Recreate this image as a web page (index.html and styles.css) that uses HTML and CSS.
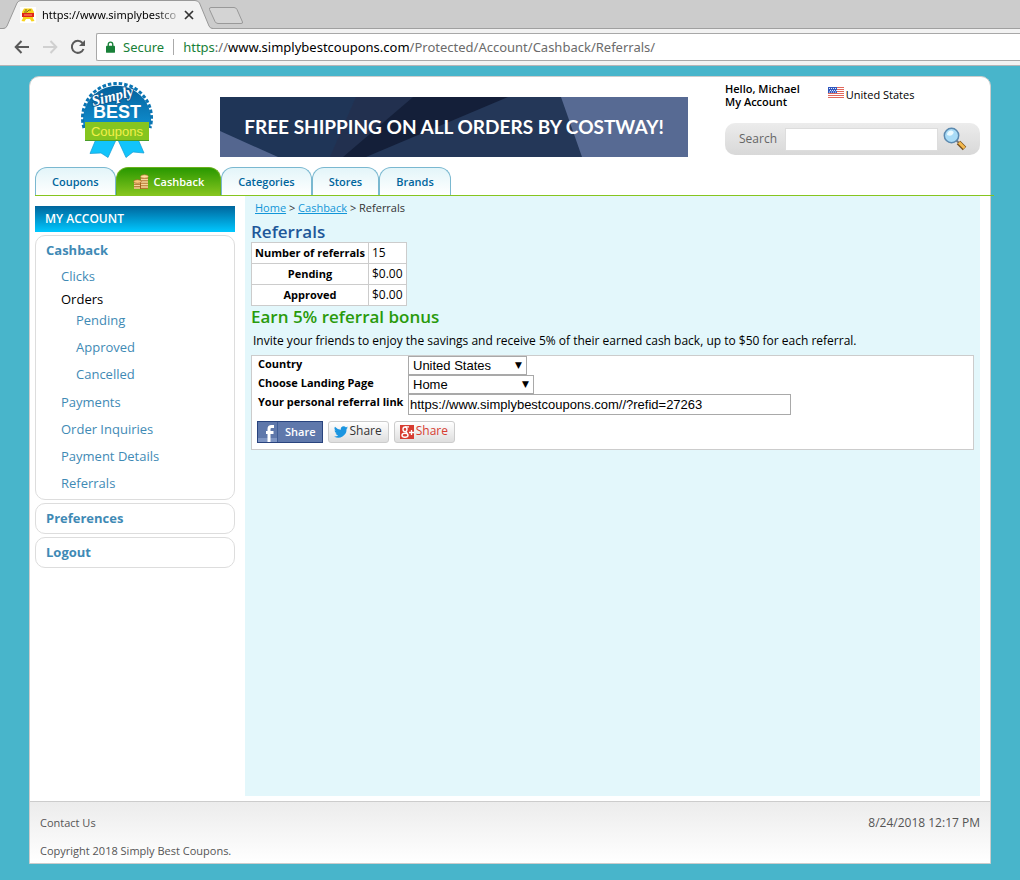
FILE: index.html
```html
<!DOCTYPE html>
<html lang="en">
<head>
<meta charset="utf-8">
<title>Referrals - Simply Best Coupons</title>
<link rel="stylesheet" href="styles.css">
</head>
<body>
<div class="browser">
  <div class="tabstrip">
    <svg class="tab-shapes" width="250" height="29" viewBox="0 0 250 29" aria-hidden="true">
      <path d="M3 29Q6 28.500 7 26L17 3Q18.500.5 21 .5H195Q198 .5 199.500 3L209 26Q210 28.500 213 29Z" fill="#f2f2f2"/>
      <path d="M0 28.500H3Q6 28.500 7 26L17 3Q18.500.5 21 .5H195Q198 .5 199.500 3L209 26Q210 28.500 213 28.500" fill="none" stroke="#999"/>
      <path d="M211 7.500H234Q236 7.500 237 9.500L242.500 22Q243 23.500 241 23.500H218Q216 23.500 215 21.500L209.500 9.500Q209 7.500 211 7.500Z" fill="#d4d4d4" stroke="#999"/>
    </svg>
    <div class="tab">
      <svg width="16" height="16" viewBox="0 0 16 16" aria-hidden="true"><path fill="#fff" d="M0 0h16v16H0z"/><path d="M4 1.500h8L14 5l-1 6 1.500 3-3 .5L10 12H6l-1.500 2.500-3-.5L3 11 2 5Z" fill="#f8d31c"/><path d="M4 5h3l2-2h2M5 3h2" stroke="#7d6a20" fill="none"/><path d="M2 6h12v4H2z" fill="#df2419"/><path d="M4 8h8" stroke="#ff9a72"/></svg>
      <span class="tab-title">https://www.simplybestco</span>
      <button class="icon-btn" aria-label="Close tab"><svg width="10" height="10" viewBox="0 0 10 10"><path d="M1 1l8 8M9 1L1 9" stroke="#333" stroke-width="1.700"/></svg></button>
    </div>
  </div>
  <div class="toolbar">
    <button class="icon-btn" aria-label="Back"><svg width="16" height="14" viewBox="0 0 16 14"><path d="M15 7H2M7.500 1L1.700 7l5.800 6" fill="none" stroke="#5a5a5a" stroke-width="2"/></svg></button>
    <button class="icon-btn" aria-label="Forward"><svg width="16" height="14" viewBox="0 0 16 14"><path d="M1 7h13M8.500 1l5.800 6-5.800 6" fill="none" stroke="#d0d0d0" stroke-width="2"/></svg></button>
    <button class="icon-btn" aria-label="Reload"><svg width="16" height="16" viewBox="0 0 16 16"><path d="M13.500 10A6 6 0 1 1 12.500 4" fill="none" stroke="#5a5a5a" stroke-width="2"/><path d="M15 1v6H9Z" fill="#5a5a5a"/></svg></button>
    <div class="address">
      <svg width="9" height="12" viewBox="0 0 10 13" aria-hidden="true"><path d="M1 5h8q1 0 1 1v6q0 1-1 1H1q-1 0-1-1V6q0-1 1-1Z" fill="#188038"/><path d="M2.500 6V3.500a2.500 2.500 0 0 1 5 0V6" fill="none" stroke="#188038" stroke-width="1.500"/></svg>
      <span class="secure">Secure</span>
      <span class="url"><span class="scheme">https</span><span class="dim">://</span>www.simplybestcoupons.com<span class="dim">/Protected/Account/Cashback/Referrals/</span></span>
    </div>
  </div>
</div>

<div class="page">
  <header class="header">
    <a class="logo" href="#" aria-label="Simply Best Coupons">
      <svg width="74" height="76" viewBox="0 0 74 76">
        <defs><linearGradient id="seal" x1="0" y1="0" x2="0" y2="1"><stop offset="0" stop-color="#05619c"/><stop offset="1" stop-color="#0f8fd0"/></linearGradient></defs>
        <path d="M4 46A34 34 0 1 1 70 46Z" fill="url(#seal)"/>
        <path d="M4 46A34.500 34.500 0 1 1 70 46" fill="none" stroke="#0a74b2" stroke-width="3" stroke-dasharray="3.500 2"/>
        <path d="M16 57L10 71.500l11-.5 7 4.500L36 58Z" fill="#12c4fb" stroke="#139bd3" stroke-width=".7"/>
        <path d="M58 57l6 14-11-1-7 5.500L38 58Z" fill="#12c4fb" stroke="#139bd3" stroke-width=".7"/>
        <path d="M5 40H69V59H5Z" fill="#86c51f"/>
        <path d="M5 58.500H69" stroke="#4a9c2a"/>
        <text x="37" y="54" class="logo-coupons" text-anchor="middle">Coupons</text>
        <text x="37" y="36" class="logo-best" text-anchor="middle">BEST</text>
        <text x="13" y="24" class="logo-simply" transform="rotate(-14 13 24)">Simply</text>
      </svg>
    </a>
    <a class="banner" href="#">
      <svg class="banner-art" viewBox="0 0 468 60" preserveAspectRatio="none" aria-hidden="true">
        <path d="M0 0h468v60H0z" fill="#243758"/><path d="M0 0h136L110 60H0Z" fill="#1f3557"/><path d="M136 0h57L124 60H110Z" fill="#22304f"/>
        <path d="M193 0h95L146 60H123Z" fill="#141f39"/><path d="M341 0h127v60H362Z" fill="#576a93"/><path d="M0 34L58 60H0Z" fill="#54668f"/>
      </svg>
      <span class="banner-text">FREE SHIPPING ON ALL ORDERS BY COSTWAY!</span>
    </a>
    <div class="header-side">
      <div class="greeting">
        <div class="who"><span>Hello, Michael</span><a href="#">My Account</a></div>
        <div class="region">
          <svg width="16" height="11" viewBox="0 0 16 11" aria-hidden="true"><path fill="#fff" d="M0 0h16v11H0z"/><path d="M0 .5h16M0 2.500h16M0 4.500h16M0 6.500h16M0 8.500h16M0 10.500h16" stroke="#e0685c"/><path fill="#3158bd" d="M0 0h9v6H0z"/><path d="M1 1.500h8M2 3.500h7M1 5h8" stroke="#dce7ff" stroke-dasharray="1 1"/></svg>
          <span>United States</span>
        </div>
      </div>
      <form class="search">
        <label for="q">Search</label>
        <input id="q" type="text">
        <button class="icon-btn" type="button" aria-label="Search"><svg width="24" height="24" viewBox="0 0 24 24"><path d="M13 13l4 4" stroke="#777" stroke-width="2"/><path d="M15.500 15.500l6 6" stroke="#76501e" stroke-width="5"/><path d="M16 15.500l5.500 5.500" stroke="#f4b94e" stroke-width="3"/><circle cx="8.500" cy="8.500" r="7.200" fill="#a9dcf7" stroke="#5b89af" stroke-width="1.500"/><path d="M4 8q0-4 4-4.500Q12 4 10 7T4 8Z" fill="#eafaff"/></svg></button>
      </form>
    </div>
  </header>

  <nav class="nav">
    <a href="#">Coupons</a>
    <a href="#" class="active">
      <svg width="16" height="16" viewBox="0 0 16 16" aria-hidden="true"><path d="M7.500 2h7.500v13H7.500z" fill="#b4762e"/><path d="M1 7h7v8H1z" fill="#a5641f"/><path d="M8 3h7M8 5.500h7M8 8h7M8 10.500h7M8 13h7M1 9h6M1 11.500h6M1 14h6" stroke="#f6d69b" stroke-width="1.300"/><ellipse cx="11.500" cy="2.500" rx="3.800" ry="1.700" fill="#ffdf9c" stroke="#b67836" stroke-width=".7"/><ellipse cx="4.500" cy="7.500" rx="3.800" ry="1.800" fill="#f9c879" stroke="#a8672b" stroke-width=".7"/></svg>
      Cashback</a>
    <a href="#">Categories</a>
    <a href="#">Stores</a>
    <a href="#">Brands</a>
  </nav>

  <div class="body">
    <aside class="sidebar">
      <h2>MY ACCOUNT</h2>
      <section class="box main-box">
        <a class="box-title" href="#">Cashback</a>
        <ul class="menu">
          <li><a href="#">Clicks</a></li>
          <li class="group"><span>Orders</span>
            <ul>
              <li><a href="#">Pending</a></li>
              <li><a href="#">Approved</a></li>
              <li><a href="#">Cancelled</a></li>
            </ul>
          </li>
          <li><a href="#">Payments</a></li>
          <li><a href="#">Order Inquiries</a></li>
          <li><a href="#">Payment Details</a></li>
          <li><a href="#">Referrals</a></li>
        </ul>
      </section>
      <section class="box"><a class="box-title" href="#">Preferences</a></section>
      <section class="box"><a class="box-title" href="#">Logout</a></section>
    </aside>

    <main class="content">
      <div class="crumbs"><a href="#">Home</a> &gt; <a href="#">Cashback</a> &gt; Referrals</div>
      <h1>Referrals</h1>
      <table class="stats">
        <tr><th scope="row">Number of referrals</th><td>15</td></tr>
        <tr><th scope="row">Pending</th><td>$0.00</td></tr>
        <tr><th scope="row">Approved</th><td>$0.00</td></tr>
      </table>
      <h2>Earn 5% referral bonus</h2>
      <p>Invite your friends to enjoy the savings and receive 5% of their earned cash back, up to $50 for each referral.</p>
      <form class="invite">
        <div class="fields">
          <label for="country">Country</label>
          <span class="pick country"><select id="country"><option>United States</option></select></span>
          <label for="landing">Choose Landing Page</label>
          <span class="pick landing"><select id="landing"><option>Home</option></select></span>
          <label for="link">Your personal referral link</label>
          <input id="link" type="text" value="https://www.simplybestcoupons.com//?refid=27263">
        </div>
        <div class="shares">
          <button type="button" class="share facebook"><svg width="20" height="20" viewBox="0 0 20 20" aria-hidden="true"><path d="M0 16h20v4H0z" fill="#7e95c3"/><path d="M11 20V7q0-2.500 2.500-2.500H16M8 10.500h7.500" fill="none" stroke="#fff" stroke-width="3"/><path d="M19.500 0v20" stroke="#3f5d96"/></svg><span>Share</span></button>
          <button type="button" class="share"><svg width="14" height="12" viewBox="0 0 24 20" aria-hidden="true"><path d="M24 2.400a10 10 0 0 1-2.800.8A5 5 0 0 0 23.300.5a10 10 0 0 1-3.100 1.200 4.900 4.900 0 0 0-8.400 4.500A14 14 0 0 1 1.700 1.100a4.900 4.900 0 0 0 1.500 6.600 5 5 0 0 1-2.200-.6 4.900 4.900 0 0 0 3.900 4.900 5 5 0 0 1-2.200.1 4.900 4.900 0 0 0 4.600 3.400A9.900 9.900 0 0 1 0 17.500 14 14 0 0 0 21.500 5Z" fill="#1b95e0"/></svg><span>Share</span></button>
          <button type="button" class="share google"><svg width="14" height="14" viewBox="0 0 14 14" aria-hidden="true"><path fill="#d73d32" d="M0 0h14v14H0z"/><ellipse cx="5" cy="4.300" rx="2" ry="2.300" fill="none" stroke="#fff" stroke-width="1.400"/><ellipse cx="5" cy="10.200" rx="3" ry="2" fill="none" stroke="#fff" stroke-width="1.400"/><path d="M5 1.800h4M5.500 6.500l2 2M9 7.500h5M11.500 5v5" stroke="#fff" stroke-width="1.300"/></svg><span>Share</span></button>
        </div>
      </form>
    </main>
  </div>

  <footer class="footer">
    <div><a href="#">Contact Us</a><span class="date">8/24/2018 12:17 PM</span></div>
    <div>Copyright 2018 Simply Best Coupons.</div>
  </footer>
</div>
</body>
</html>
```
FILE: styles.css
```css
* { box-sizing: border-box; }
body {
  margin: 0;
  min-height: 100vh;
  display: flex;
  flex-direction: column;
  background: #48b5cb;
  font: 12px/14px "Trebuchet MS", "Open Sans", sans-serif;
  color: #000;
}
a { color: inherit; text-decoration: none; }
svg { display: block; flex: none; }
h1, h2, p, ul { margin: 0; padding: 0; }
ul { list-style: none; }
.icon-btn { border: 0; padding: 0; background: none; display: block; flex: none; }

/* browser frame */
.browser { font-family: "Segoe UI", "Noto Sans", sans-serif; }
.tabstrip { position: relative; height: 29px; background: #ccc; border-bottom: 1px solid #a0a0a0; }
.tab-shapes { position: absolute; left: 0; top: 0; }
.tab { position: relative; display: flex; align-items: center; width: 216px; height: 28px; padding: 2px 22px 0 20px; }
.tab-title {
  flex: none; width: 142px; margin-left: 6px; font-size: 11px; line-height: 16px; white-space: nowrap;
  -webkit-mask-image: linear-gradient(90deg, #000 114px, transparent 142px);
  mask-image: linear-gradient(90deg, #000 114px, transparent 142px);
}
.toolbar { display: flex; align-items: center; gap: 12px; height: 37px; padding: 0 0 0 14px; background: #f2f2f2; border-bottom: 1px solid #b6b4b6; }
.address {
  flex: 1; display: flex; align-items: center; height: 28px; margin-left: -2px; padding-left: 9px;
  background: #fff; border: 1px solid #a8a8a8; border-right: 0; border-radius: 2px 0 0 2px; font-size: 13px; line-height: 20px;
}
.secure { margin-left: 8px; padding-right: 9px; border-right: 1px solid #aaa; line-height: 16px; color: #188038; }
.url { margin-left: 9px; white-space: nowrap; }
.scheme { color: #188038; }
.dim { color: #6b6b6b; }

/* page shell */
.page {
  flex: 1; display: flex; flex-direction: column; margin: 10px 29px 16px;
  background: #fff; border: 1px solid #ccc; border-radius: 10px 10px 0 0;
}
.header { display: flex; padding: 5px 10px 9px 50px; }
.logo { flex: none; width: 140px; }
.logo-best { font: bold 18px "Liberation Sans", sans-serif; fill: #fff; }
.logo-coupons { font: 13px "Liberation Sans Narrow", "Liberation Sans", sans-serif; fill: #f2f04a; }
.logo-simply { font: italic bold 15px "Liberation Serif", serif; fill: #fff; stroke: #0b5c95; stroke-width: 2px; paint-order: stroke; }
.banner { position: relative; flex: 0 1 468px; height: 60px; margin: 15px 37px 0 0; display: flex; align-items: center; justify-content: center; }
.banner-art { position: absolute; width: 100%; height: 100%; }
.banner-text { position: relative; font: bold 19px/24px Lato, sans-serif; color: #fff; white-space: nowrap; }
.header-side { flex: 1 0 255px; min-width: 0; }
.greeting { display: flex; gap: 28px; font-size: 11px; }
.who { display: flex; flex-direction: column; line-height: 13px; font-weight: 600; }
.region { display: flex; gap: 2px; padding-top: 5px; }
.region span { padding-top: 1px; }
.search {
  display: flex; align-items: center; height: 32px; margin-top: 15px; padding: 0 13px 0 14px;
  border-radius: 10px; background: linear-gradient(#ececec, #d8d8d8); color: #666;
}
.search label { width: 46px; }
.search input { flex: 1; width: 0; min-width: 0; height: 23px; border: 1px solid #ddd; background: #fff; margin-right: 5px; }

.nav { display: flex; margin: 0 -4px 0 5px; border-bottom: 1px solid #86c51f; }
.nav a {
  display: flex; align-items: center; gap: 6px; height: 28px; padding: 0 16px;
  border: 1px solid #7ab8d0; border-bottom: 0; border-radius: 12px 12px 0 0;
  background: linear-gradient(#e3f5f9, #fff); color: #00659c; font-size: 11px; font-weight: 600;
}
.nav .active { gap: 5px; border-color: #6ab11c; background: linear-gradient(#299800, #86c51f); color: #fff; }

.body { flex: 1; display: flex; gap: 10px; padding: 0 10px 5px 5px; }
.sidebar { flex: 0 0 200px; padding-top: 10px; font-size: 13px; line-height: 20px; color: #3f8ab5; }
.sidebar h2 { height: 26px; margin-bottom: 3px; padding-left: 10px; background: linear-gradient(#00659c, #00c8ff); color: #fff; font-size: 12px; line-height: 26px; font-weight: 600; }
.box { margin-bottom: 3px; padding: 4px 10px 5px; border: 1px solid #ddd; border-radius: 10px; }
.main-box { padding-bottom: 2px; }
.box-title { display: block; font-weight: 700; line-height: 20px; }
.menu { padding: 3px 0 0 15px; }
.menu li { height: 27px; line-height: 27px; }
.menu .group { height: auto; padding-bottom: 1px; color: #000; }
.group span { display: block; height: 17px; line-height: 19px; }
.group ul { padding-left: 15px; color: #3f8ab5; }

.content { flex: 1; min-width: 0; padding: 5px 6px; background: #e3f7fb; }
.crumbs { padding-left: 4px; font-size: 11px; color: #333; }
.crumbs a { color: #1296d8; text-decoration: underline; }
.content h1, .content h2 { font-size: 17px; line-height: 22px; font-weight: 600; }
.content h1 { margin-top: 6px; line-height: 21px; color: #1e5799; }
.content h2 { color: #299a0b; }
.stats { border-collapse: collapse; background: #fff; }
.stats th, .stats td { border: 1px solid #ccc; padding: 3px; text-align: left; height: 21px; }
.stats th { font-size: 11px; font-weight: 700; text-align: center; }
.content p { padding: 6px 2px 7px; }
.invite { padding: 0 5px 6px; background: #fff; border: 1px solid #ccc; }
.fields { display: grid; grid-template-columns: 150px 1fr; padding-left: 1px; align-items: start; }
.fields label { font-size: 11px; font-weight: 700; line-height: 16px; white-space: nowrap; }
.pick { position: relative; height: 19px; }
.country { width: 119px; }
.landing { width: 126px; }
.pick::after { content: "▼"; position: absolute; right: 5px; top: 2px; font: 9px/14px "DejaVu Sans", sans-serif; pointer-events: none; }
.fields select, .fields input { font: 13px/17px "Liberation Sans", sans-serif; color: #000; background: #fff; border: 1px solid #a9a9a9; border-radius: 0; }
.fields select { width: 100%; height: 19px; padding: 0 4px; appearance: none; display: block; }
.fields input { width: 383px; max-width: 100%; height: 21px; padding: 1px; }
.shares { display: flex; gap: 5px; margin-top: 6px; }
.share {
  display: flex; align-items: center; gap: 2px; height: 22px; padding: 0 6px 0 5px; font: inherit; color: #333;
  border: 1px solid #ccc; border-radius: 3px; background: linear-gradient(#fff, #dedede);
}
.share span { padding-bottom: 2px; }
.facebook { gap: 7px; padding: 0 6px 0 0; border-color: #29447e; border-radius: 0; background: #5f78ab; color: #fff; font-size: 11px; font-weight: 600; }
.facebook span { padding: 0; }
.google { color: #d73d32; }

.footer { border-top: 1px solid #ccc; padding: 7px 10px 0; height: 62px; font-size: 11px; line-height: 28px; background: linear-gradient(#ececec, #fff); color: #555; }
.footer div { display: flex; justify-content: space-between; }
.date { font-size: 12px; }
```
